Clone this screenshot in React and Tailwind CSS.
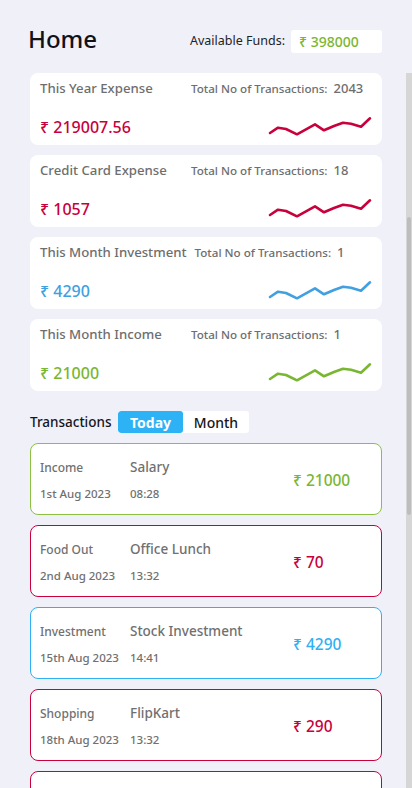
import React from 'react'

const RED = '#c8003c'
const BLUE = '#40a0e0'
const GREEN = '#7ab632'

const summary = [
  { title: 'This Year Expense', count: 2043, amount: '₹ 219007.56', color: 'text-[#c8003c]', line: RED },
  { title: 'Credit Card Expense', count: 18, amount: '₹ 1057', color: 'text-[#c8003c]', line: RED },
  { title: 'This Month Investment', count: 1, amount: '₹ 4290', color: 'text-[#40a0e0]', line: BLUE },
  { title: 'This Month Income', count: 1, amount: '₹ 21000', color: 'text-[#7ab632]', line: GREEN },
]

const transactions = [
  { category: 'Income', date: '1st Aug 2023', name: 'Salary', time: '08:28', amount: '₹ 21000', border: 'border-[#8cc043]', color: 'text-[#7ab632]' },
  { category: 'Food Out', date: '2nd Aug 2023', name: 'Office Lunch', time: '13:32', amount: '₹ 70', border: 'border-[#c8003c]', color: 'text-[#c8003c]' },
  { category: 'Investment', date: '15th Aug 2023', name: 'Stock Investment', time: '14:41', amount: '₹ 4290', border: 'border-[#2fb0f3]', color: 'text-[#2fb0f3]' },
  { category: 'Shopping', date: '18th Aug 2023', name: 'FlipKart', time: '13:32', amount: '₹ 290', border: 'border-[#c8003c]', color: 'text-[#c8003c]' },
]

function Sparkline({ color }) {
  return (
    <svg width="104" height="20" viewBox="0 0 104 20" className="shrink-0">
      <polyline
        points="2,17 10,11.7 18,13 29,18.3 38,13.3 47,8.3 56,14.3 66,10 75,6.7 83,7.7 93,10.7 102,2.3"
        fill="none"
        stroke={color}
        strokeWidth="2.6"
        strokeLinejoin="round"
        strokeLinecap="round"
      />
    </svg>
  )
}

function SummaryCard({ item }) {
  return (
    <div className="h-[72px] shrink-0 rounded-[8px] bg-white pl-[10px] pr-[10px] pt-[6px] pb-[9px] flex flex-col justify-between">
      <div className="flex items-center gap-[8px]">
        <span className="min-w-[143px] text-[13.2px] font-medium text-[#6e6e6e]">{item.title}</span>
        <span className="text-[11.6px] font-medium text-[#6e6e6e]">Total No of Transactions:</span>
        <span className="text-[13px] font-medium text-[#6e6e6e] -ml-[2px]">{item.count}</span>
      </div>
      <div className="flex items-end justify-between">
        <span className={`text-[16px] font-medium leading-[18px] ${item.color}`}>{item.amount}</span>
        <Sparkline color={item.line} />
      </div>
    </div>
  )
}

function TransactionCard({ t }) {
  return (
    <div className={`h-[72px] shrink-0 rounded-[8px] border bg-white pl-[9px] pt-[3px] flex items-center ${t.border}`}>
      <div className="w-[90px] flex flex-col gap-[7px]">
        <span className="text-[12px] font-medium text-[#707070] leading-[19px]">{t.category}</span>
        <span className="text-[11.5px] font-medium text-[#707070] leading-[19px]">{t.date}</span>
      </div>
      <div className="w-[163px] flex flex-col gap-[7px]">
        <span className="text-[13.5px] font-medium text-[#707070] leading-[19px]">{t.name}</span>
        <span className="text-[11.5px] font-medium text-[#707070] leading-[19px]">{t.time}</span>
      </div>
      <span className={`text-[15.5px] font-medium ${t.color}`}>{t.amount}</span>
    </div>
  )
}

export default function App() {
  return (
    <div className="w-[412px] h-[788px] bg-[#f0f0f9] flex flex-col overflow-hidden font-['Noto_Sans',sans-serif]">
      <div className="h-[73px] shrink-0 pl-[28px] pr-[30px] pt-[25px] flex items-start justify-between">
        <h1 className="text-[24px] leading-[28px] font-medium text-[#111118]">Home</h1>
        <div className="flex items-center gap-[6px] mt-[5px]">
          <span className="text-[12.5px] text-[#222]">Available Funds:</span>
          <div className="w-[91px] h-[23px] rounded-[3px] bg-white pl-[8px] flex items-center">
            <span className="text-[14px] font-medium text-[#7ab632]">₹ 398000</span>
          </div>
        </div>
      </div>

      <div className="flex-1 min-h-0 flex">
        <div className="flex-1 overflow-hidden pl-[30px] pr-[24px] flex flex-col">
          <div className="flex flex-col gap-[10px]">
            {summary.map(item => (
              <SummaryCard key={item.title} item={item} />
            ))}
          </div>

          <div className="flex items-center mt-[20px] h-[22px]">
            <span className="w-[88px] text-[13.5px] font-medium text-[#151520]">Transactions</span>
            <div className="flex h-[22px] rounded-[3px] bg-white overflow-hidden">
              <span className="w-[65px] rounded-[3px] bg-[#2db2f6] text-white text-[14px] font-bold flex items-center justify-center">Today</span>
              <span className="w-[66px] text-[#151520] text-[14px] font-medium flex items-center justify-center">Month</span>
            </div>
          </div>

          <div className="flex flex-col gap-[10px] mt-[10px]">
            {transactions.map((t, i) => (
              <TransactionCard key={i} t={t} />
            ))}
            <div className="h-[72px] shrink-0 rounded-[8px] border border-[#c8003c] bg-white" />
          </div>
        </div>

        <div className="w-[6px] shrink-0 bg-[#d6d6d6] flex flex-col">
          <div className="h-[144px] shrink-0" />
          <div className="h-[298px] shrink-0 mx-[1px] rounded-full bg-[#bdbdbd]" />
        </div>
      </div>
    </div>
  )
}
